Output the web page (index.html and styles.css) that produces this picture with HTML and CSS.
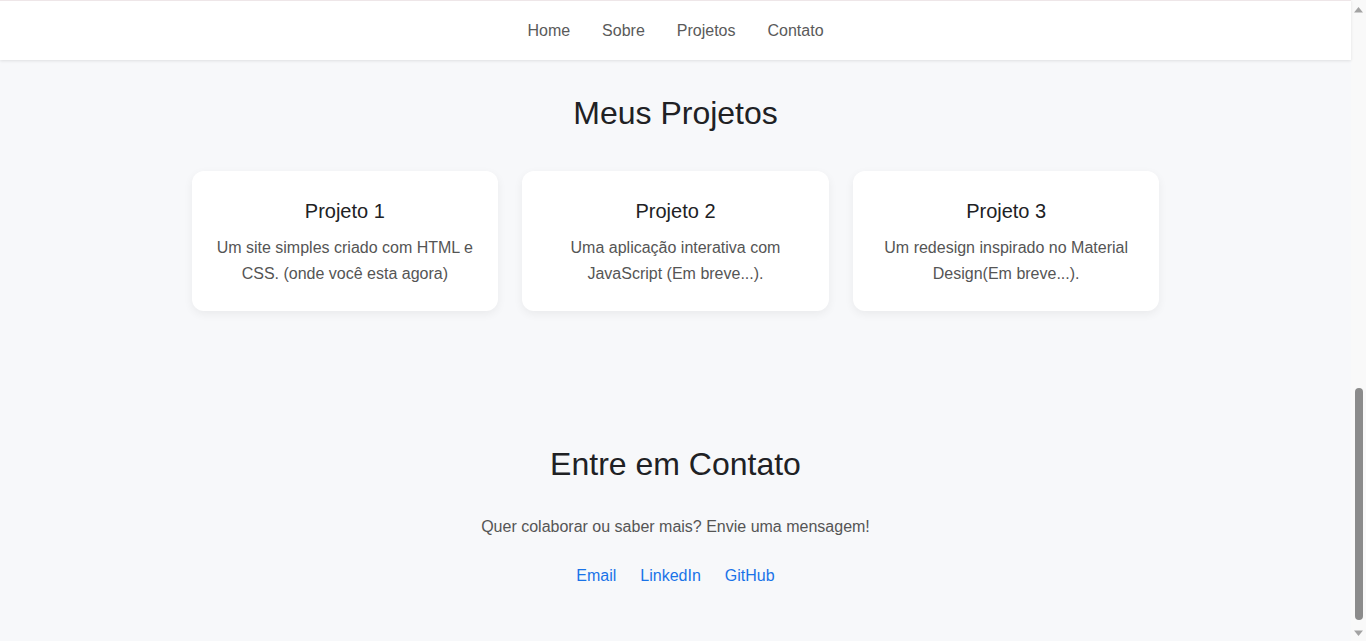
FILE: index.html
```html
<!DOCTYPE html>
<html lang="pt-BR">
<head>
<meta charset="utf-8">
<title>Portfólio</title>
<link rel="stylesheet" href="styles.css">
</head>
<body>
<div class="page">
  <nav class="nav">
    <a href="#home">Home</a>
    <a href="#sobre">Sobre</a>
    <a href="#projetos">Projetos</a>
    <a href="#contato">Contato</a>
  </nav>
  <main class="main">
    <section class="projects" id="projetos">
      <h2 class="section-title">Meus Projetos</h2>
      <div class="grid">
        <div class="card">
          <h3>Projeto 1</h3>
          <p>Um site simples criado com HTML e CSS. (onde você esta agora)</p>
        </div>
        <div class="card">
          <h3>Projeto 2</h3>
          <p>Uma aplicação interativa com JavaScript (Em breve...).</p>
        </div>
        <div class="card">
          <h3>Projeto 3</h3>
          <p>Um redesign inspirado no Material Design(Em breve...).</p>
        </div>
      </div>
    </section>
    <section class="contact" id="contato">
      <h2 class="section-title contact-title">Entre em Contato</h2>
      <p class="contact-text">Quer colaborar ou saber mais? Envie uma mensagem!</p>
      <div class="contact-links">
        <a href="#">Email</a>
        <a href="#">LinkedIn</a>
        <a href="#">GitHub</a>
      </div>
    </section>
  </main>
</div>
<div class="scrollbar" aria-hidden="true">
  <svg class="sb-arrow up" width="9" height="6" viewBox="0 0 9 6"><polygon points="4.5,0 9,5.5 0,5.5" fill="#a3a3a3"/></svg>
  <div class="sb-spacer"></div>
  <div class="sb-thumb"></div>
  <svg class="sb-arrow down" width="9" height="6" viewBox="0 0 9 6"><polygon points="0,0.5 9,0.5 4.5,6" fill="#a3a3a3"/></svg>
</div>
</body>
</html>
```
FILE: styles.css
```css
* { box-sizing: border-box; }

html, body {
  margin: 0;
  height: 100%;
}

body {
  display: flex;
  overflow: hidden;
  background: #f7f8fa;
  font-family: "Liberation Sans", Arial, sans-serif;
  font-size: 16px;
  line-height: 1.6;
  color: #222;
}

.page {
  flex: 1;
  display: flex;
  flex-direction: column;
  min-width: 0;
}

.nav {
  height: 60px;
  background: #fff;
  border-top: 1px solid #eee6e8;
  box-shadow: 0 1px 3px rgba(0, 0, 0, 0.1);
  display: flex;
  justify-content: center;
  align-items: center;
  gap: 32px;
  position: relative;
  z-index: 1;
}

.nav a {
  color: #5a5a5a;
  text-decoration: none;
}

.main {
  flex: 1;
}

.section-title {
  margin: 0;
  font-size: 32px;
  font-weight: 400;
  line-height: 1.6;
  color: #202124;
  text-align: center;
}

.projects {
  padding-top: 27.5px;
}

.grid {
  max-width: 1000px;
  margin: 32.5px auto 0;
  padding: 0 16px;
  display: grid;
  grid-template-columns: repeat(3, 1fr);
  gap: 24px;
}

.card {
  background: #fff;
  border-radius: 12px;
  padding: 24px 24px 25px;
  text-align: center;
  box-shadow: 0 3px 10px rgba(0, 0, 0, 0.06);
}

.card h3 {
  margin: 0 0 8px;
  font-size: 20px;
  font-weight: 400;
  color: #202124;
}

.card p {
  margin: 0;
  color: #555;
}

.contact {
  margin-top: 128px;
  text-align: center;
}

.contact-text {
  margin: 23px 0 24px;
  color: #555;
}

.contact-links {
  display: flex;
  justify-content: center;
  gap: 24px;
}

.contact-links a {
  color: #1a73e8;
  text-decoration: none;
}

.scrollbar {
  width: 15px;
  flex: none;
  background: #f9f9f9;
  display: flex;
  flex-direction: column;
  align-items: center;
  padding: 7px 0 5px;
}

.sb-arrow { display: block; flex: none; }

.sb-spacer { flex: 1; }

.sb-thumb {
  width: 8px;
  height: 232px;
  border-radius: 4px;
  background: #8b8b8b;
  margin-bottom: 10px;
}
```
